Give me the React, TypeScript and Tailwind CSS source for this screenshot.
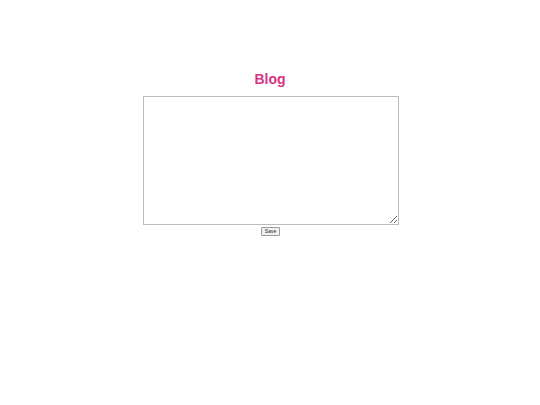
export default function App() {
  return (
    <div className="flex min-h-[405px] flex-col items-center bg-white pt-[69px] font-['Liberation_Sans',Arial,sans-serif]">
      <h1 className="text-[14px] font-bold leading-[20px] text-[#d63384]">Blog</h1>
      <textarea className="ml-[2px] mt-[7px] h-[129px] w-[256px] resize border border-[#bcbcbc] bg-white text-[7px]" />
      <button className="ml-[1px] mt-[2px] h-[9px] rounded-[1px] border border-[#9a9a9a] bg-[#f0f0f0] px-[3px] text-[5px] leading-[7px] text-[#222]">
        Save
      </button>
    </div>
  );
}
